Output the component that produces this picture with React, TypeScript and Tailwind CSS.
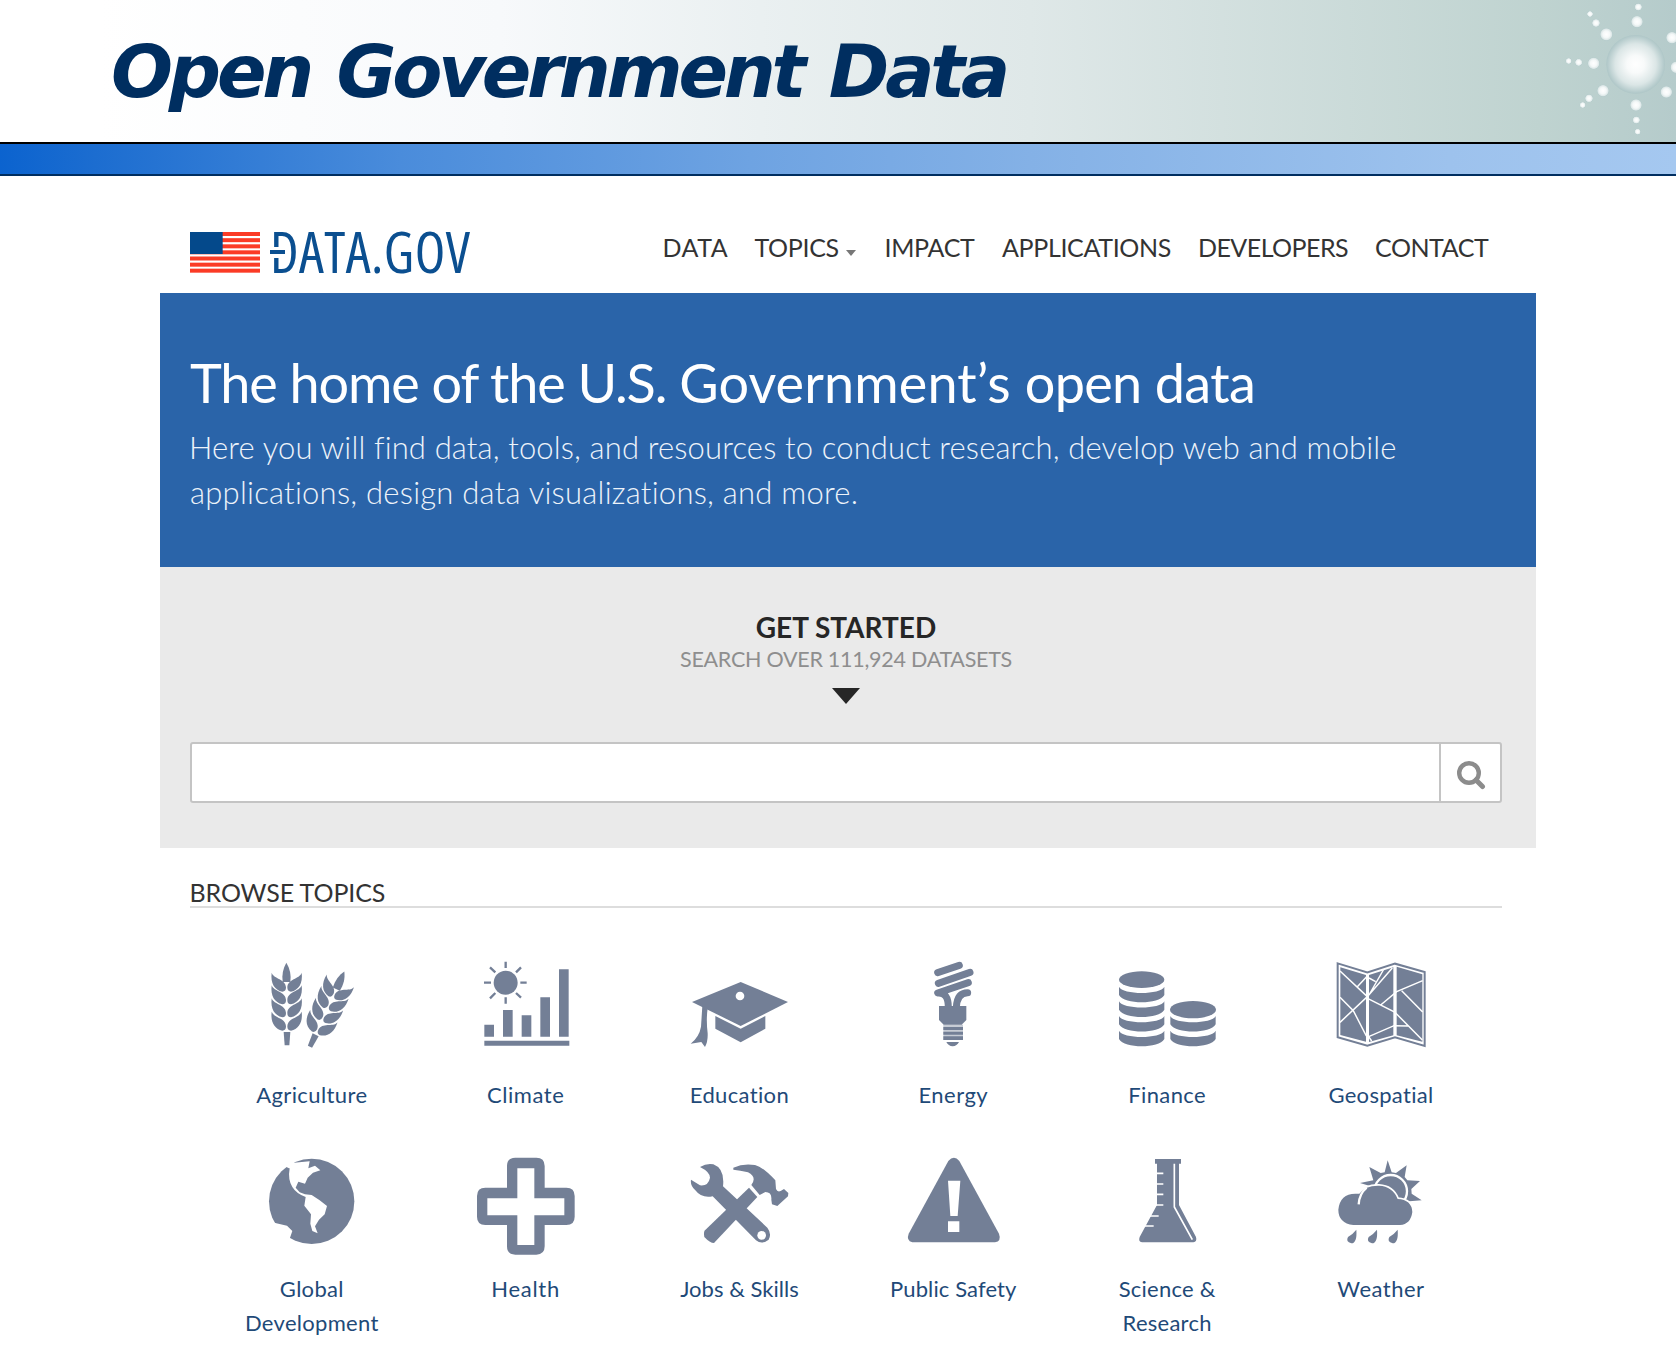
import React, { useState } from "react";

const navItems = [
  { label: "DATA", className: "w-[92px] tracking-[0.5px]" },
  { label: "TOPICS", className: "w-[130px] tracking-[-0.34px]", caret: true },
  { label: "IMPACT", className: "w-[117.5px] tracking-[-0.32px]" },
  { label: "APPLICATIONS", className: "w-[196px] tracking-[-0.34px]" },
  { label: "DEVELOPERS", className: "w-[177px] tracking-[-0.54px]" },
  { label: "CONTACT", className: "tracking-[-0.45px]" },
];

const dots = [
  [295, 21, 11],
  [291, 65, 18],
  [150, 42, 9],
  [168, 69, 12],
  [199, 103, 19],
  [86, 183, 9],
  [116, 187, 11],
  [161, 190, 18],
  [189, 272, 18],
  [147, 295, 12],
  [128, 315, 9],
  [288, 315, 18],
  [289, 360, 11],
  [293, 395, 9],
  [379, 276, 18],
  [396, 113, 18],
  [409, 202, 18],
];

const Sunburst = () => (
  <svg className="w-[136px] h-[142px]" viewBox="0 0 408 426">
    <defs>
      <radialGradient id="ball">
        <stop offset="0" stopColor="#ffffff" />
        <stop offset="0.3" stopColor="#f8fafa" />
        <stop offset="0.7" stopColor="#dbe6e6" />
        <stop offset="1" stopColor="#aec6c7" />
      </radialGradient>
      <radialGradient id="dot">
        <stop offset="0" stopColor="#ffffff" />
        <stop offset="0.55" stopColor="#f4f8f8" />
        <stop offset="0.85" stopColor="#dde8e8" />
        <stop offset="1" stopColor="#b3cacb" />
      </radialGradient>
    </defs>
    <circle cx="287" cy="193" r="88" fill="url(#ball)" />
    {dots.map(([x, y, r]) => (
      <circle key={`${x}-${y}`} cx={x} cy={y} r={r} fill="url(#dot)" />
    ))}
  </svg>
);

const Flag = () => (
  <svg className="w-[70px] h-[41px]" viewBox="0 0 210 123">
    {[0, 18.5, 37, 55, 73.5, 92, 110].map((y) => (
      <rect key={y} y={y} width="210" height="12" fill="#fb3b26" />
    ))}
    <rect width="98" height="66" fill="#04498b" />
  </svg>
);

const Ear = () => (
  <>
    <path d="M170 68C181 85 185 105 182 126H159C156 105 160 85 170 68z" />
    {[0, 38, 77, 117].map((y) => (
      <g key={y} transform={`translate(0 ${y})`}>
        <path d="M126 98C133 118 168 116 169 142Q169 155 158 155C135 150 122 130 126 98z" />
        <path d="M216 98C209 118 174 116 173 142Q173 155 184 155C207 150 220 130 216 98z" />
      </g>
    ))}
    <path d="M162 276H182L179 316H165z" />
  </>
);

const Disc = ({ x, y }: { x: number; y: number }) => (
  <path
    transform={`translate(${x} ${y})`}
    d="M0 0C10 25 126 25 136 0V25C120 54 16 54 0 25z"
  />
);

const topics = [
  {
    name: ["Agriculture"],
    tracking: "tracking-[0.4px]",
    viewBox: "64 60 360 300",
    icon: (
      <>
        <Ear />
        <g transform="translate(69 4) rotate(25 171 316)">
          <Ear />
        </g>
      </>
    ),
  },
  {
    name: ["Climate"],
    tracking: "tracking-[0.55px]",
    viewBox: "705 60 360 300",
    icon: (
      <>
        <circle cx="827" cy="128" r="36" />
        <path
          d="M827 84V65M827 172V191M783 128H762M871 128H890M796 97L780 82M858 97L873 82M796 159L780 175M858 159L873 173"
          stroke="#737f96"
          strokeWidth="7"
        />
        <path d="M763 254H792V290H763zM819 210H848V290H819zM875 226H904V290H875zM931 172H960V290H931zM987 88H1016V290H987zM763 302H1018V317H763z" />
      </>
    ),
  },
  {
    name: ["Education"],
    tracking: "tracking-[0.35px]",
    viewBox: "57 60 360 300",
    icon: (
      <>
        <path d="M96 186L242 126L384 186L242 258z" />
        <path d="M166 228L242 266L316 228V266L242 307L166 266z" />
        <path d="M127 198L143 204Q138 240 143 280Q144 305 135 321L124 306L92 311Q118 290 123 260z" />
        <circle cx="240" cy="168" r="13" fill="#fff" />
      </>
    ),
  },
  {
    name: ["Energy"],
    tracking: "tracking-[0.5px]",
    viewBox: "698 60 360 300",
    icon: (
      <>
        <path
          d="M832 98L897 76M834 130L929 97M924 128L832 159Q864 156 864 202M922 158Q890 158 888 202"
          fill="none"
          stroke="#737f96"
          strokeWidth="21"
          strokeLinecap="round"
          strokeLinejoin="round"
        />
        <path d="M836 198H918V240L904 254H850L836 240z" />
        <path d="M849 254H908V300H849z" opacity="0.4" />
        <path d="M849 261H908V270H849zM849 275H908V284H849zM849 289H908V300H849zM858 306H896Q890 318 877 319Q864 318 858 306z" />
      </>
    ),
  },
  {
    name: ["Finance"],
    tracking: "tracking-[0.4px]",
    viewBox: "49 60 360 300",
    icon: (
      <>
        <ellipse cx="153" cy="119" rx="68" ry="25" />
        <Disc x={85} y={140} />
        <Disc x={85} y={184} />
        <Disc x={85} y={228} />
        <Disc x={85} y={272} />
        <ellipse cx="307" cy="209" rx="69" ry="26" />
        <Disc x={239} y={228} />
        <Disc x={239} y={272} />
      </>
    ),
  },
  {
    name: ["Geospatial"],
    tracking: "tracking-[0.3px]",
    viewBox: "690 60 360 300",
    icon: (
      <>
        <path
          d="M743 70L832 97L915 71L1004 96V318L915 292L832 317L743 292z"
          fill="none"
          stroke="#737f96"
          strokeWidth="6"
        />
        <path d="M751 82L828 105V305L751 285zM837 105L910 82V286L837 306zM920 80L997 103V305L920 286z" />
        <path
          d="M750 93L832 170L907 84M802 140L832 108M837 114L857 125M880 90L837 165M750 247L832 170M750 172L790 212L829 288M834 176L914 216L997 300M872 195L920 155L998 122M935 152L998 216M836 290L912 257L954 258M836 290L845 303"
          fill="none"
          stroke="#fff"
          strokeWidth="4.5"
        />
      </>
    ),
  },
  {
    name: ["Global", "Development"],
    tracking: "tracking-[0.3px]",
    viewBox: "64 41 360 300",
    icon: (
      <>
        <circle cx="246" cy="183" r="128" />
        <path
          d="M178 84L150 70L170 50L200 55L193 67L240 63L236 84L256 76L272 90L250 97L234 112L226 130L206 124L198 142L210 156L226 162L246 164L270 180L292 197L285 222L268 238L256 258L264 279L248 272L242 250L244 222L224 196L228 170Q200 160 188 140Q174 118 180 84z"
          fill="#fff"
        />
        <path d="M110 240L140 249L172 256L188 272L180 295L150 325L100 300z" fill="#fff" />
      </>
    ),
  },
  {
    name: ["Health"],
    tracking: "tracking-[0.7px]",
    viewBox: "705 41 360 300",
    icon: (
      <path
        fillRule="evenodd"
        d="M856 52H919Q944 52 944 77V142H1009Q1034 142 1034 167V229Q1034 254 1009 254H944V318Q944 343 919 343H856Q831 343 831 318V254H766Q741 254 741 229V167Q741 142 766 142H831V77Q831 52 856 52zM862 84V174H772V225H862V314H913V225H1003V174H913V84z"
      />
    ),
  },
  {
    name: ["Jobs & Skills"],
    tracking: "tracking-[0.02px]",
    viewBox: "57 41 360 300",
    icon: (
      <>
        <path d="M120 80Q140 68 160 72Q195 85 189 138L322 262Q336 280 326 298Q306 314 288 300L158 168Q125 175 106 150Q90 135 93 118L120 135Q145 138 150 112Q150 95 120 80z" />
        <path d="M267 142L292 170L162 308Q150 308 133 290Q130 275 135 270z" />
        <path d="M220 82Q250 68 285 74Q310 80 346 120L348 146Q352 156 362 152L372 146L385 158L384 168L352 197L336 192L334 178Q336 155 316 155L299 164L274 134Q292 110 264 96Q240 90 220 88z" />
        <circle cx="305" cy="285" r="13" fill="#fff" />
      </>
    ),
  },
  {
    name: ["Public Safety"],
    tracking: "tracking-[0.12px]",
    viewBox: "698 41 360 300",
    icon: (
      <>
        <path d="M864 62Q881 42 897 62L1016 280Q1024 302 1004 306H756Q737 301 745 280z" />
        <path d="M863 121H900L892 227H870zM863 243H897V275H863z" fill="#fff" />
      </>
    ),
  },
  {
    name: ["Science &", "Research"],
    tracking: "tracking-[0.25px]",
    viewBox: "49 41 360 300",
    icon: (
      <>
        <path d="M193 56H271V70H265V194L316 290Q320 304 308 306H154Q142 304 147 290L199 194V70H193z" />
        <path
          d="M251 70V200L305 298M199 99H218M199 131H218M199 162H218M195 194H218M178 227H204M160 257H189"
          fill="none"
          stroke="#fff"
          strokeWidth="5"
        />
      </>
    ),
  },
  {
    name: ["Weather"],
    tracking: "tracking-[0.5px]",
    viewBox: "690 41 360 300",
    icon: (
      <>
        <path d="M810 128L850 120L838 80L872 98L884 96L893 60L905 96L918 98L950 75L944 110L952 120L990 122L964 146L965 160L995 180L940 184L850 140z" />
        <circle cx="902" cy="153" r="49" stroke="#fff" strokeWidth="7" />
        <path
          d="M790 254Q745 248 745 208Q750 160 796 160H808Q826 135 867 136Q908 138 923 176Q965 178 967 215Q962 252 930 254z"
          stroke="#fff"
          strokeWidth="10"
          paintOrder="stroke"
        />
        <path d="M806 192Q808 160 830 142" fill="none" stroke="#fff" strokeWidth="7" />
        {[0, 62, 124].map((x) => (
          <path
            key={x}
            transform={`translate(${x} 0)`}
            d="M799 268Q802 308 784 309Q766 304 774 290Q788 282 799 268z"
          />
        ))}
      </>
    ),
  },
];

export default function App() {
  const [query, setQuery] = useState("");

  return (
    <div className="w-[1676px] h-[1354px] overflow-hidden bg-white font-['Lato',sans-serif]">
      {/* Slide header */}
      <header className="h-[142px] flex justify-between bg-[linear-gradient(90deg,#ffffff_0px,#ffffff_100px,#f7f9fb_500px,#eaf0f1_760px,#dfe8e8_1030px,#bfd3d0_1540px,#b5cbcb_1676px)]">
        <h1 className="pl-[111px] pt-[22px] text-[73px] leading-[100px] font-bold italic tracking-[-4.2px] [word-spacing:5.4px] whitespace-nowrap text-[#002e60] font-['DejaVu_Sans',sans-serif]">
          Open Government Data
        </h1>
        <Sunburst />
      </header>
      <div className="h-[34px] border-t-2 border-b-2 border-t-black border-b-[#002e60] bg-[linear-gradient(90deg,#0b63cf_0px,#1c6dd0_95px,#4a8cdb_400px,#6ea3e2_750px,#84b1e6_1030px,#9dc2ed_1450px,#a5c8f0_1676px)]" />

      <main className="ml-[160px] w-[1376px]">
        {/* Logo and navigation */}
        <div className="h-[117px] flex pl-[30px]">
          <div className="flex w-[472.5px]">
            <div className="pt-[56px]">
              <Flag />
            </div>
            <div className="relative pt-[45px] pl-[10px]">
              <span className="block whitespace-nowrap text-[56px] leading-[60px] font-stretch-75% tracking-[0.45px] text-[#0b4f90] font-['Open_Sans',sans-serif]">
                DATA.GOV
              </span>
              <span className="absolute left-[13px] top-[71px] w-[8px] h-[11px] bg-white" />
              <span className="absolute left-[10px] top-[74px] w-[15px] h-[4px] bg-[#0b4f90]" />
            </div>
          </div>
          <nav className="flex pt-[56px] text-[25px] leading-[30px] text-[#333333]">
            {navItems.map((item) => (
              <a key={item.label} className={`flex whitespace-nowrap ${item.className}`}>
                {item.label}
                {item.caret && (
                  <span className="ml-[7px] mt-[18px] h-0 border-x-[5px] border-t-[6px] border-x-transparent border-t-[#777777]" />
                )}
              </a>
            ))}
          </nav>
        </div>

        {/* Hero */}
        <section className="h-[274px] bg-[#2a64a9] pl-[30px] pt-[63px] text-white whitespace-nowrap">
          <h2 className="text-[54px] leading-[54px] tracking-[-0.65px]">
            <span className="tracking-[-1.1px]">The home of the U.S. </span>
            <span className="tracking-[0.12px]">Government’s </span>
            open data
          </h2>
          <p className="mt-[15px] text-[31px] leading-[44.5px] font-light text-[#edf3fa]">
            <span className="block -ml-[1px] tracking-[0.14px]">
              Here you will find data, tools, and resources to conduct research, develop web and mobile
            </span>
            <span className="block tracking-[0.24px]">
              applications, design data visualizations, and more.
            </span>
          </p>
        </section>

        {/* Search */}
        <section className="h-[281px] bg-[#eaeaea] pl-[30px] pr-[34px] pt-[43px] flex flex-col items-center">
          <h3 className="text-[28px] leading-[34px] font-bold text-[#262626]">GET STARTED</h3>
          <p className="mt-[2px] text-[21.5px] leading-[26px] tracking-[-0.26px] text-[#8e8e8e]">
            SEARCH OVER 111,924 DATASETS
          </p>
          <span className="mt-4 h-0 border-x-[14px] border-t-[16px] border-x-transparent border-t-[#262626]" />
          <form
            className="mt-[38px] w-full h-[61px] flex rounded-[3px] border-2 border-[#c4c4c4] bg-white"
            onSubmit={(e) => e.preventDefault()}
          >
            <input
              className="flex-1 px-4 text-[25px] outline-none"
              value={query}
              onChange={(e) => setQuery(e.target.value)}
              aria-label="Search datasets"
            />
            <button className="w-[61px] border-l-2 border-[#c4c4c4] flex items-center justify-center">
              <svg className="w-[30px] h-[30px] mt-1" viewBox="0 0 30 30" fill="none" stroke="#8c8c8c">
                <circle cx="13" cy="13" r="9.8" strokeWidth="4.4" />
                <path d="M20 20L26.5 26.5" strokeWidth="5" strokeLinecap="round" />
              </svg>
            </button>
          </form>
        </section>

        {/* Topics */}
        <section className="pt-[29px]">
          <h3 className="ml-[30px] w-[1312px] h-[31px] border-b-2 border-[#dddddd] text-[25px] leading-[30px] tracking-[-0.1px] text-[#333333]">
            <span className="-ml-[0.5px]">BROWSE TOPICS</span>
          </h3>
          <div className="mt-[52px] ml-[44.4px] w-[1283px] grid grid-cols-6 gap-y-[42.5px]">
            {topics.map((topic) => (
              <a key={topic.name[0]} className="flex flex-col items-center">
                <svg className="w-[120px] h-[100px] overflow-visible" viewBox={topic.viewBox} fill="#737f96">
                  {topic.icon}
                </svg>
                <span
                  className={`mt-[18px] pl-[1px] text-center text-[22px] leading-[33.5px] text-[#1f4a78] ${topic.tracking}`}
                >
                  {topic.name.map((line) => (
                    <span key={line} className="block">
                      {line}
                    </span>
                  ))}
                </span>
              </a>
            ))}
          </div>
        </section>
      </main>
    </div>
  );
}
